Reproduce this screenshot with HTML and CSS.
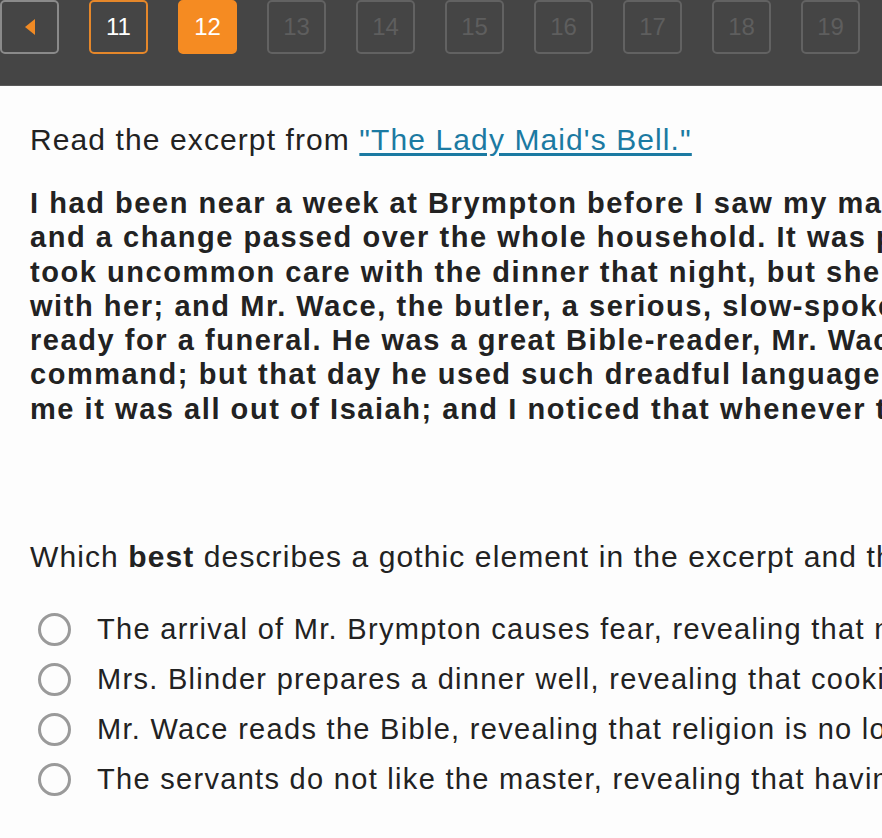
FILE: index.html
```html
<!DOCTYPE html>
<html lang="en">
<head>
    <meta charset="UTF-8">
    <meta name="viewport" content="width=device-width, initial-scale=1.0">
    <title>Reading Quiz</title>
    <link rel="stylesheet" href="styles.css">
</head>
<body>
    <div class="pager">
        <div class="page-btn prev">
            <svg width="14" height="18" viewBox="0 0 14 18"><path d="M12 1 L2 9 L12 17 Z" fill="#f08a24"/></svg>
        </div>
        <div class="page-btn done">11</div>
        <div class="page-btn current">12</div>
        <div class="page-btn">13</div>
        <div class="page-btn">14</div>
        <div class="page-btn">15</div>
        <div class="page-btn">16</div>
        <div class="page-btn">17</div>
        <div class="page-btn">18</div>
        <div class="page-btn">19</div>
    </div>

    <div class="container">
        <p class="intro">Read the excerpt from <a href="#">"The Lady Maid's Bell."</a></p>

        <p class="excerpt">I had been near a week at Brympton before I saw my master. Then word came that he was arriving that afternoon,<br>
and a change passed over the whole household. It was plain that nobody in the house liked him. Mrs. Blinder<br>
took uncommon care with the dinner that night, but she snapped at the kitchen-maid in a way quite unusual<br>
with her; and Mr. Wace, the butler, a serious, slow-spoken man, went about looking<br>
ready for a funeral. He was a great Bible-reader, Mr. Wace was, and had a beautiful assortment of texts at his<br>
command; but that day he used such dreadful language that I was about to leave the room, when he assured<br>
me it was all out of Isaiah; and I noticed that whenever the master came Mr. Wace always took to the prophets.</p>

        <p class="question">Which <b>best</b> describes a gothic element in the excerpt and the effect it creates?</p>

        <div class="options">
            <label class="option"><span class="radio"></span>The arrival of Mr. Brympton causes fear, revealing that not all is well at the house.</label>
            <label class="option"><span class="radio"></span>Mrs. Blinder prepares a dinner well, revealing that cooking is important in the house.</label>
            <label class="option"><span class="radio"></span>Mr. Wace reads the Bible, revealing that religion is no longer important.</label>
            <label class="option"><span class="radio"></span>The servants do not like the master, revealing that having a job is a burden.</label>
        </div>
    </div>
</body>
</html>
```

FILE: styles.css
```css
body {
    margin: 0;
    padding: 0;
    background-color: #fdfdfd;
    font-family: "Liberation Sans", Arial, sans-serif;
    color: #222;
    overflow: hidden;
}

.pager {
    display: flex;
    gap: 30px;
    height: 86px;
    background-color: #454545;
    border-bottom: 1px solid #5a5a5a;
    box-sizing: border-box;
    white-space: nowrap;
    overflow: hidden;
}
.page-btn {
    flex: 0 0 auto;
    width: 59px;
    height: 54px;
    box-sizing: border-box;
    border: 2px solid #626262;
    border-radius: 5px;
    display: flex;
    align-items: center;
    justify-content: center;
    font-size: 24px;
    color: #5e5e5e;
}
.page-btn.prev {
    border-color: #8a8a8a;
}
.page-btn.done {
    border-color: #e5872a;
    color: #fff;
}
.page-btn.current {
    background-color: #f58b22;
    border-color: #f58b22;
    color: #fff;
}

.container {
    padding: 0 0 0 30px;
    white-space: nowrap;
    overflow: hidden;
}
.intro {
    font-size: 30px;
    letter-spacing: 1.1px;
    line-height: 36px;
    margin: 36px 0 0;
}
.intro a {
    color: #1b7aa2;
    text-decoration: underline;
    text-underline-offset: 3px;
}
.excerpt {
    font-size: 29px;
    font-weight: bold;
    letter-spacing: 1.55px;
    line-height: 34.3px;
    margin: 28px 0 0;
}
.question {
    font-size: 30px;
    letter-spacing: 1.1px;
    line-height: 36px;
    margin: 113px 0 0;
}
.options {
    display: flex;
    flex-direction: column;
    gap: 17px;
    margin-top: 38px;
    padding-left: 8px;
}
.option {
    display: flex;
    align-items: center;
    font-size: 29px;
    letter-spacing: 1.3px;
    height: 33px;
}
.radio {
    width: 33px;
    height: 33px;
    box-sizing: border-box;
    border: 3px solid #9a9a9a;
    border-radius: 50%;
    margin-right: 26px;
    flex: 0 0 auto;
}
```
